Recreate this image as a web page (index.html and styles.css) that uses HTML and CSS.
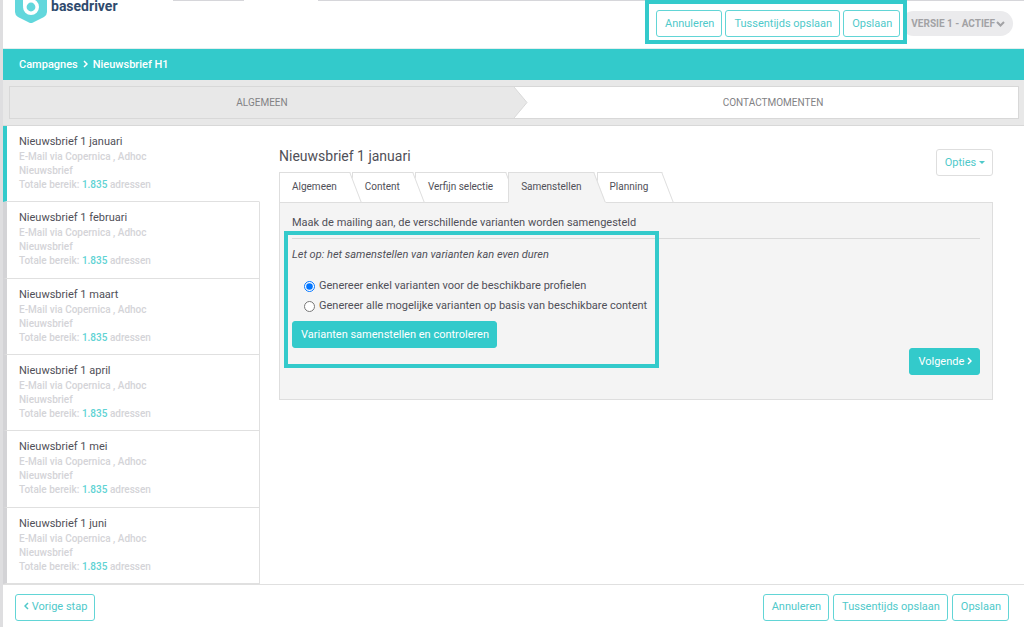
FILE: index.html
```html
<!DOCTYPE html>
<html lang="nl">
<head>
<meta charset="utf-8">
<title>Basedriver - Nieuwsbrief H1</title>
<link rel="stylesheet" href="styles.css">
</head>
<body>
<div class="app">
  <header class="header">
    <div class="stubs"><span class="stub stub-short"></span><span class="stub stub-long"></span></div>
    <div class="logo">
      <svg class="logo-mark" viewBox="0 0 32 40" aria-hidden="true">
        <path d="M3 7 16 0 29 7Q32 9 32 12V29Q32 32 29 34L18 39.400Q16 40.400 14 39.400L3 34Q0 32 0 29V12Q0 9 3 7Z" fill="#62d7dc"/>
        <path d="M10 8V23" stroke="#fff" stroke-width="4" fill="none"/>
        <circle cx="16" cy="24" r="6.200" fill="#62d7dc" stroke="#fff" stroke-width="3.600"/>
      </svg>
      <span class="logo-name">basedriver</span>
    </div>
    <div class="header-actions">
      <div class="btn-group highlighted">
        <button class="btn" type="button">Annuleren</button>
        <button class="btn" type="button">Tussentijds opslaan</button>
        <button class="btn" type="button">Opslaan</button>
      </div>
      <button class="version" type="button">VERSIE 1 - ACTIEF<svg class="chevron-down" viewBox="0 0 9 6" aria-hidden="true"><path d="M1 1 4.500 4.500 8 1"/></svg></button>
    </div>
  </header>
  <nav class="breadcrumb" aria-label="Kruimelpad">
    <a href="#">Campagnes</a>
    <svg class="chevron" viewBox="0 0 5 8" aria-hidden="true"><path d="M1 1 4 4 1 7"/></svg>
    <a href="#">Nieuwsbrief H1</a>
  </nav>
  <nav class="steps">
    <div class="steps-track">
      <a class="step step-done" href="#">ALGEMEEN</a>
      <svg class="step-arrow" viewBox="0 0 14 32" preserveAspectRatio="none" aria-hidden="true"><path d="M0 0 13 16 0 32Z" fill="#e8e8e8"/><path d="M0 0 13 16 0 32" fill="none" stroke="#d8d8d8"/></svg>
      <a class="step step-next" href="#">CONTACTMOMENTEN</a>
    </div>
  </nav>
  <div class="body">
    <aside class="moments">
      <a class="moment active" href="#"><span class="moment-title">Nieuwsbrief 1 januari</span><span class="moment-meta">E-Mail via Copernica , Adhoc<br>Nieuwsbrief<br>Totale bereik: <b>1.835</b> adressen</span></a>
      <a class="moment" href="#"><span class="moment-title">Nieuwsbrief 1 februari</span><span class="moment-meta">E-Mail via Copernica , Adhoc<br>Nieuwsbrief<br>Totale bereik: <b>1.835</b> adressen</span></a>
      <a class="moment" href="#"><span class="moment-title">Nieuwsbrief 1 maart</span><span class="moment-meta">E-Mail via Copernica , Adhoc<br>Nieuwsbrief<br>Totale bereik: <b>1.835</b> adressen</span></a>
      <a class="moment" href="#"><span class="moment-title">Nieuwsbrief 1 april</span><span class="moment-meta">E-Mail via Copernica , Adhoc<br>Nieuwsbrief<br>Totale bereik: <b>1.835</b> adressen</span></a>
      <a class="moment" href="#"><span class="moment-title">Nieuwsbrief 1 mei</span><span class="moment-meta">E-Mail via Copernica , Adhoc<br>Nieuwsbrief<br>Totale bereik: <b>1.835</b> adressen</span></a>
      <a class="moment" href="#"><span class="moment-title">Nieuwsbrief 1 juni</span><span class="moment-meta">E-Mail via Copernica , Adhoc<br>Nieuwsbrief<br>Totale bereik: <b>1.835</b> adressen</span></a>
    </aside>
    <main class="content">
      <div class="content-head">
        <div class="content-left">
          <h1 class="title">Nieuwsbrief 1 januari</h1>
          <nav class="tabs">
            <a class="tab" href="#"><span>Algemeen</span></a>
            <a class="tab" href="#"><span>Content</span></a>
            <a class="tab" href="#"><span>Verfijn selectie</span></a>
            <a class="tab active" href="#"><span>Samenstellen</span></a>
            <a class="tab" href="#"><span>Planning</span></a>
          </nav>
        </div>
        <button class="btn options" type="button">Opties <svg class="caret" viewBox="0 0 6 3" aria-hidden="true"><path d="M0 0H6L3 3Z"/></svg></button>
      </div>
      <section class="panel">
        <p class="intro">Maak de mailing aan, de verschillende varianten worden samengesteld</p>
        <form class="compose">
          <p class="note">Let op: het samenstellen van varianten kan even duren</p>
          <div class="choices">
            <label class="choice"><input type="radio" name="variant" checked>Genereer enkel varianten voor de beschikbare profielen</label>
            <label class="choice"><input type="radio" name="variant">Genereer alle mogelijke varianten op basis van beschikbare content</label>
          </div>
          <button class="btn solid" type="button">Varianten samenstellen en controleren</button>
        </form>
        <button class="btn solid next" type="button">Volgende <svg class="chevron" viewBox="0 0 5 8" aria-hidden="true"><path d="M1 1 4 4 1 7"/></svg></button>
      </section>
    </main>
  </div>
  <footer class="footer">
    <button class="btn" type="button"><svg class="chevron" viewBox="0 0 5 8" aria-hidden="true"><path d="M4 1 1 4 4 7"/></svg> Vorige stap</button>
    <div class="btn-group">
      <button class="btn" type="button">Annuleren</button>
      <button class="btn" type="button">Tussentijds opslaan</button>
      <button class="btn" type="button">Opslaan</button>
    </div>
  </footer>
</div>
</body>
</html>
```
FILE: styles.css
```css
* { box-sizing: border-box; }
body { margin: 0; font-family: Roboto, "Liberation Sans", sans-serif; font-size: 11px; color: #505058; }
a { color: inherit; text-decoration: none; }
p, h1 { margin: 0; font-weight: 400; }
button { font: inherit; cursor: pointer; }
.app { min-height: 100vh; display: flex; flex-direction: column; border-left: 3px solid #dedee0; background: #fff; }

.header { position: relative; height: 49px; padding: 0 11px 0 12px; display: flex; justify-content: space-between; overflow: hidden; border-bottom: 1px solid #e4eeee; }
.stubs { position: absolute; inset: 0 0 auto 170px; display: flex; gap: 74px; }
.stub { height: 1px; background: #d6d6da; }
.stub-short { width: 71px; }
.stub-long { flex: 1; }
.logo { display: flex; align-items: flex-end; gap: 4px; height: 23px; }
.logo-mark { width: 32px; height: 40px; flex: none; }
.logo-name { font-size: 14px; line-height: 12px; font-weight: 700; color: #2f4a6d; padding-bottom: 11px; }
.header-actions { display: flex; align-items: flex-start; z-index: 1; }
.btn-group { display: flex; gap: 4px; }
.highlighted { gap: 3px; padding: 6px 3px 3px 7px; border: 4px solid #33cacb; background: #fff; z-index: 1; }
.btn { height: 27px; padding: 0 7px 0 8px; border: 1px solid #62d5d6; border-radius: 3px; background: #fff; color: #4fc9ca; font-size: 11px; line-height: 16px; white-space: nowrap; }
.version { display: flex; align-items: center; gap: 1px; height: 25px; margin: 11px 0 0 -6px; padding: 0 8px 0 10px; border: 0; border-radius: 13px; background: #ebebed; color: #a2a2a5; font-size: 10px; font-weight: 700; white-space: nowrap; }
.chevron-down { width: 9px; height: 6px; fill: none; stroke: currentColor; stroke-width: 2; }
.chevron { width: 5px; height: 8px; fill: none; stroke: currentColor; stroke-width: 1.500; }

.breadcrumb { height: 31px; padding: 0 16px 1px; display: flex; align-items: center; gap: 5px; background: #33cacb; color: #fff; font-size: 11px; font-weight: 500; }
.steps { padding: 6px 5px 6px 6px; background: #e8e8e8; border-bottom: 1px solid #d8d8d8; }
.steps-track { height: 33px; display: flex; border: 1px solid #d8d8d8; background: #fff; }
.step { flex: 1; display: flex; align-items: center; justify-content: center; color: #828285; font-size: 10px; }
.step-done { background: #e8e8e8; }
.step-next::before { content: ""; width: 14px; }
.step-arrow { width: 14px; height: 100%; margin-right: -14px; }

.body { flex: 1; display: flex; }
.moments { width: 257px; flex: none; display: flex; flex-direction: column; }
.moment { flex: 1; padding: 8px 12px 0; border: solid #e0e0e0; border-width: 0 1px 1px 0; border-left: 4px solid #d3d3d6; }
.moment.active { border-left-color: #33cacb; border-right-color: transparent; }
.moment-title { display: block; font-size: 11px; line-height: 16px; }
.moment-meta { display: block; font-size: 10px; font-weight: 500; line-height: 14px; color: #d4d4d8; }
.moment-meta b { font-weight: 500; color: #5fd3d4; }

.content { flex: 1; padding: 20px 31px 0 19px; }
.content-head { display: flex; justify-content: space-between; align-items: flex-start; }
.title { font-size: 14px; line-height: 20px; margin-bottom: 6px; }
.options { margin-top: 3px; border-color: #dedede; }
.caret { width: 6px; height: 3px; fill: currentColor; vertical-align: middle; }
.tabs { display: flex; position: relative; z-index: 1; }
.tab { position: relative; height: 31px; padding: 0 15px 0 13px; line-height: 30px; font-size: 10px; white-space: nowrap; }
.tab span { position: relative; z-index: 1; }
.tab::before, .tab::after { content: ""; position: absolute; top: 0; bottom: 0; border: 0 solid #dedede; border-bottom-width: 1px; border-top-width: 1px; background: #fff; }
.tab::before { left: 20px; right: -10px; border-right-width: 1px; transform: skewX(21deg); transform-origin: bottom right; }
.tab::after { left: 0; right: 14px; border-left-width: 1px; }
.tab:nth-child(1) { z-index: 5; }
.tab:nth-child(2) { z-index: 4; }
.tab:nth-child(3) { z-index: 3; }
.tab:nth-child(4) { z-index: 6; }
.tab.active::before, .tab.active::after { background: #f4f4f4; border-bottom-color: #f4f4f4; }

.panel { margin-top: -1px; padding: 12px 12px 24px; display: flex; flex-direction: column; align-items: flex-start; border: 1px solid #dedede; background: #f4f4f4; }
.intro { width: 100%; padding-bottom: 7px; line-height: 16px; border-bottom: 1px solid #dadada; }
.compose { position: relative; padding-top: 8px; }
.compose::after { content: ""; position: absolute; inset: -8px -12px -20px -8px; border: 4px solid #33cacb; pointer-events: none; }
.note { font-style: italic; line-height: 16px; margin-bottom: 13px; }
.choices { padding-left: 12px; margin-bottom: 5px; }
.choice { display: flex; align-items: center; gap: 4px; line-height: 20px; }
.choice input { width: 11px; height: 11px; margin: 0; }
.solid { background: #33cacb; border-color: #33cacb; color: #fff; }
.next { align-self: flex-end; }

.footer { height: 43px; padding: 2px 15px 0 12px; display: flex; align-items: center; justify-content: space-between; border-top: 1px solid #e0e0e0; }
```
